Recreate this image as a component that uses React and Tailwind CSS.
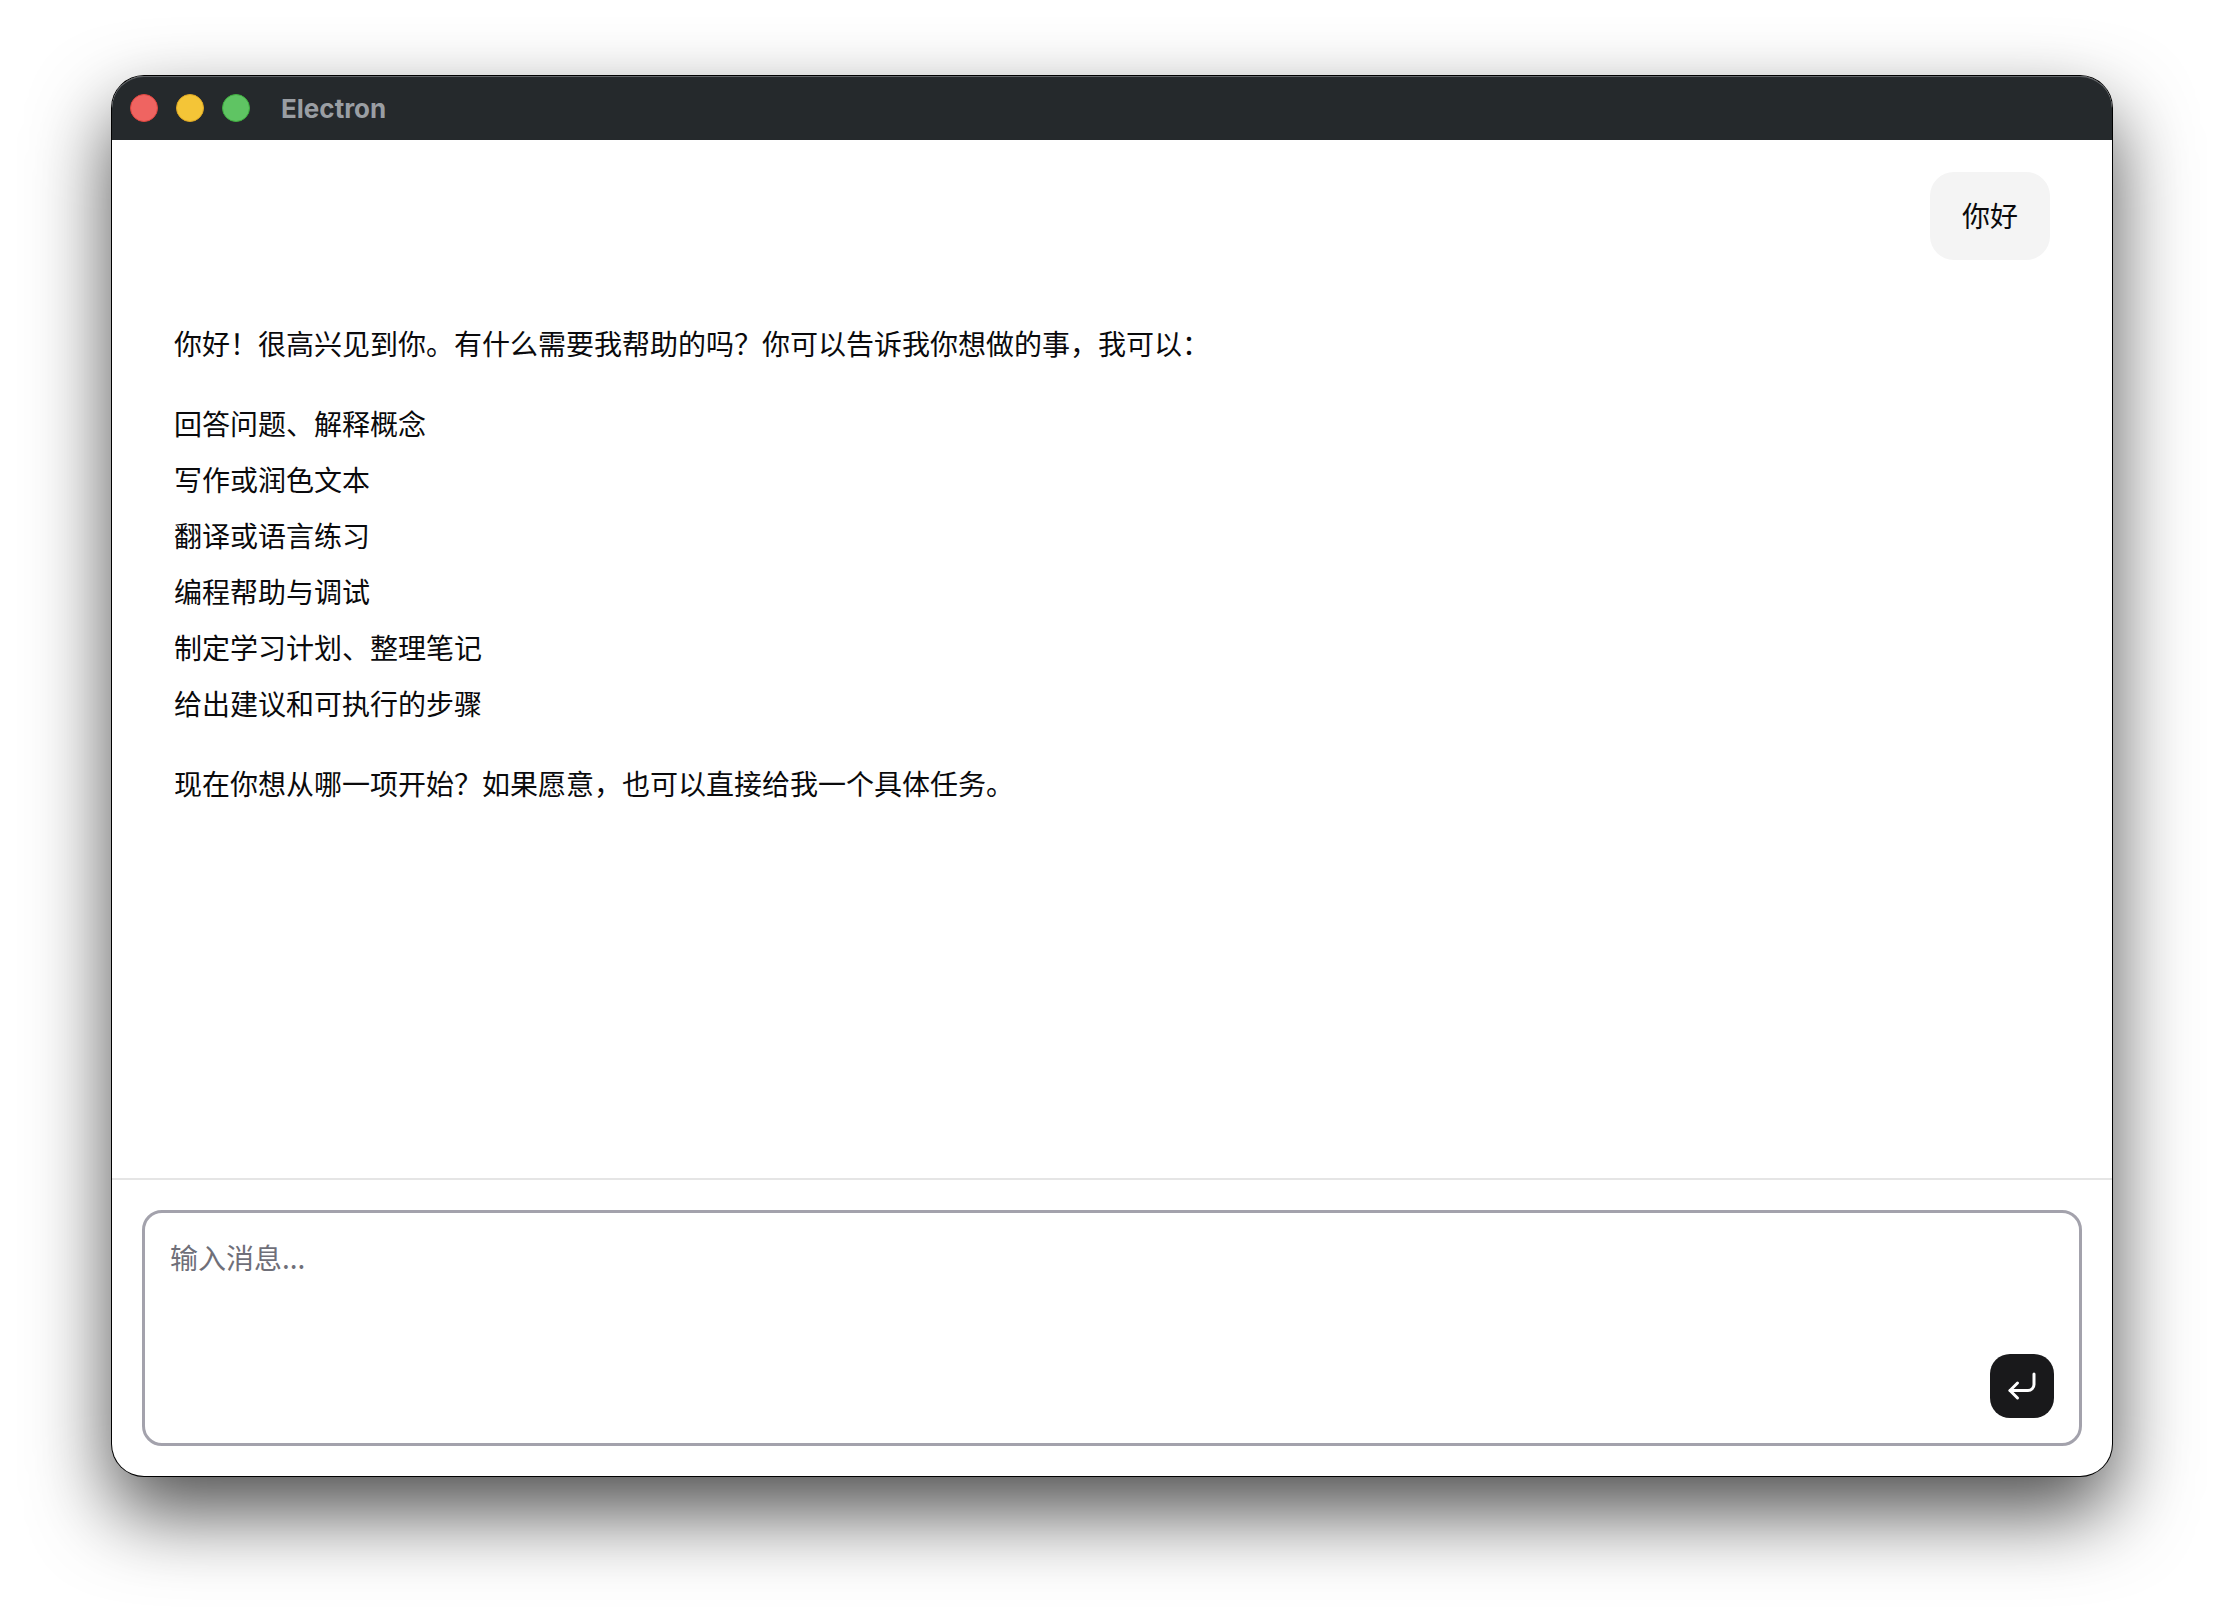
import React from "react";
import { CornerDownLeft } from "lucide-react";

const cjk = "font-['PingFang_SC','Noto_Sans_CJK_SC',sans-serif]";

const listItems = [
  "回答问题、解释概念",
  "写作或润色文本",
  "翻译或语言练习",
  "编程帮助与调试",
  "制定学习计划、整理笔记",
  "给出建议和可执行的步骤",
];

export default function App() {
  return (
    <div className="w-[2224px] h-[1624px] overflow-hidden bg-white pt-[76px] pl-[112px]">
      {/* Window */}
      <div className="w-[2000px] h-[1400px] flex flex-col rounded-[32px] bg-white shadow-[0_0_0_1px_#000,0_36px_80px_rgba(0,0,0,0.7)]">
        {/* Title bar */}
        <div className="h-[64px] shrink-0 flex items-center pl-[18px] gap-[18px] rounded-t-[32px] bg-[#25292c] shadow-[inset_0_1px_0_#63666a]">
          <span className="w-[28px] h-[28px] rounded-full bg-[#ef6461] border border-[#e0443e]" />
          <span className="w-[28px] h-[28px] rounded-full bg-[#f4c537] border border-[#dfa823]" />
          <span className="w-[28px] h-[28px] rounded-full bg-[#5fc463] border border-[#3fae3f]" />
          <span className="ml-[13px] font-['Inter',sans-serif] text-[26px] font-bold text-[#9a9ea3]">
            Electron
          </span>
        </div>

        {/* Messages */}
        <div className={`flex-1 flex flex-col px-[62px] pt-[32px] text-[28px] leading-[56px] text-[#0a0a0c] ${cjk}`}>
          <div className="self-end rounded-[24px] bg-[#f4f4f4] px-[32px] pt-[15px] pb-[17px]">你好</div>
          <p className="mt-[55px]">
            你好！很高兴见到你。有什么需要我帮助的吗？你可以告诉我你想做的事，我可以：
          </p>
          <ul className="mt-[24px]">
            {listItems.map((item) => (
              <li key={item}>{item}</li>
            ))}
          </ul>
          <p className="mt-[24px]">现在你想从哪一项开始？如果愿意，也可以直接给我一个具体任务。</p>
        </div>

        {/* Input */}
        <div className="shrink-0 border-t-2 border-[#e5e5e5] p-[30px]">
          <div className="h-[236px] flex flex-col rounded-[20px] border-[3px] border-[#a3a2ac] px-[25px] pt-[16px] pb-[25px]">
            <textarea
              placeholder="输入消息..."
              className={`flex-1 resize-none outline-none text-[28px] leading-[56px] text-[#0a0a0c] placeholder:text-[#6f6f79] ${cjk}`}
            />
            <button className="self-end w-[64px] h-[64px] shrink-0 flex items-center justify-center rounded-[20px] bg-[#19191b] text-white">
              <CornerDownLeft size={36} strokeWidth={2} />
            </button>
          </div>
        </div>
      </div>
    </div>
  );
}
